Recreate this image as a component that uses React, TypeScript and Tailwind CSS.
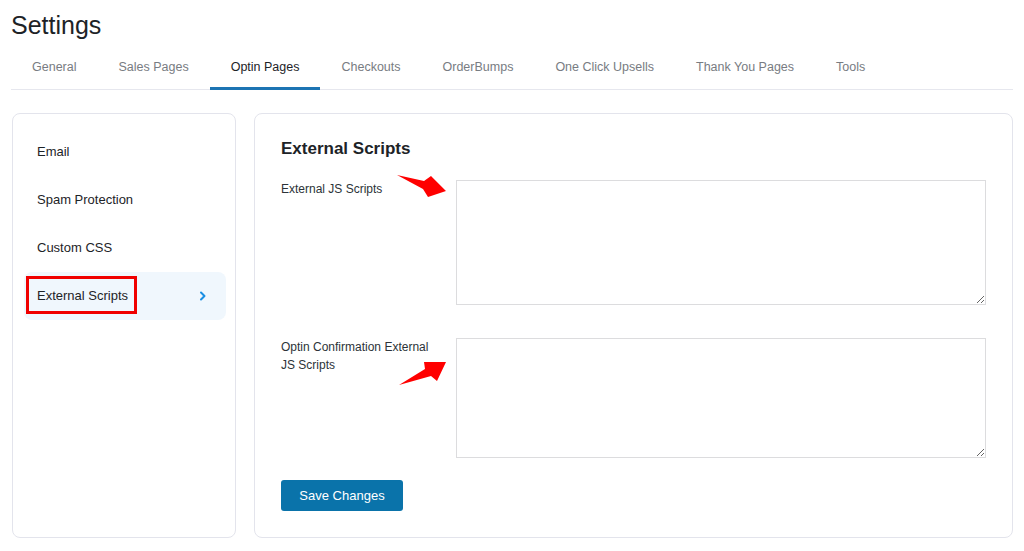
import React from 'react';

const tabs = ['General', 'Sales Pages', 'Optin Pages', 'Checkouts', 'OrderBumps', 'One Click Upsells', 'Thank You Pages', 'Tools'];
const menu = ['Email', 'Spam Protection', 'Custom CSS', 'External Scripts'];

export default function App() {
  const active = 'Optin Pages';
  const activeMenu = 'External Scripts';

  return (
    <div
      className="relative w-[1024px] h-[551px] bg-white text-[#1d2327] px-[11px] pt-[10px] overflow-hidden"
      style={{ fontFamily: '"Liberation Sans", Arial, sans-serif' }}
    >
      <h1 className="text-[25px] leading-[30px] font-normal">Settings</h1>

      {/* tabs */}
      <nav className="flex mt-[10px] border-b border-[#e6e7ee]">
        {tabs.map(t => (
          <div
            key={t}
            className={`h-[40px] -mb-px px-[21px] pt-[9px] text-[12.5px] leading-[16px] border-b-[3px] ${
              t === active ? 'border-[#1c74b3] text-[#1d2327]' : 'border-transparent text-[#787c82]'
            }`}
          >
            {t}
          </div>
        ))}
      </nav>

      <div className="flex gap-[18px] mt-[23px] pl-px">
        {/* sidebar */}
        <div className="w-[224px] h-[425px] rounded-[8px] border border-[#e3e4ec] pl-[11px] pr-[9px] pt-[14px]">
          {menu.map(m => (
            <div
              key={m}
              className={`relative h-[48px] flex items-center justify-between pl-[13px] pr-[19px] rounded-[8px] text-[13px] ${
                m === activeMenu ? 'bg-[#f0f7fd]' : ''
              }`}
            >
              <span>{m}</span>
              {m === activeMenu && (
                <>
                  <svg width="8" height="10" viewBox="0 0 8 10" fill="none">
                    <path d="M2 1.5 L5.5 5 L2 8.5" stroke="#1a8fe3" strokeWidth="2" strokeLinecap="round" strokeLinejoin="round" />
                  </svg>
                  <div className="absolute left-[2px] top-[4px] w-[111px] h-[38px] border-[3px] border-[#f00000]" />
                </>
              )}
            </div>
          ))}
        </div>

        {/* main */}
        <div className="flex-1 h-[425px] rounded-[8px] border border-[#e3e4ec] pl-[26px] pr-[26px] pt-[23px]">
          <h2 className="text-[17px] leading-[24px] font-bold">External Scripts</h2>

          <div className="grid grid-cols-[175px_1fr] mt-[19px]">
            <label className="text-[12px] leading-[18px] pr-[15px] text-[#2c3338]">External JS Scripts</label>
            <textarea className="h-[125px] border border-[#dcdcde] rounded-none outline-none" />
          </div>

          <div className="grid grid-cols-[175px_1fr] mt-[33px]">
            <label className="text-[12px] leading-[18px] pr-[15px] text-[#2c3338]">Optin Confirmation External JS Scripts</label>
            <textarea className="h-[120px] border border-[#dcdcde] rounded-none outline-none" />
          </div>

          <button className="mt-[22px] h-[31px] w-[122px] rounded-[3px] bg-[#0a73aa] text-white text-[13px]">
            Save Changes
          </button>
        </div>
      </div>

      {/* annotation arrows */}
      <svg className="absolute inset-0 pointer-events-none" width="1024" height="551">
        <polygon points="397,175 424,181 431,176 446,191 428,197 423,189" fill="#ff0000" />
        <polygon points="399,385 425,369 424,362 446,362 437,381 431,376" fill="#ff0000" />
      </svg>
    </div>
  );
}
